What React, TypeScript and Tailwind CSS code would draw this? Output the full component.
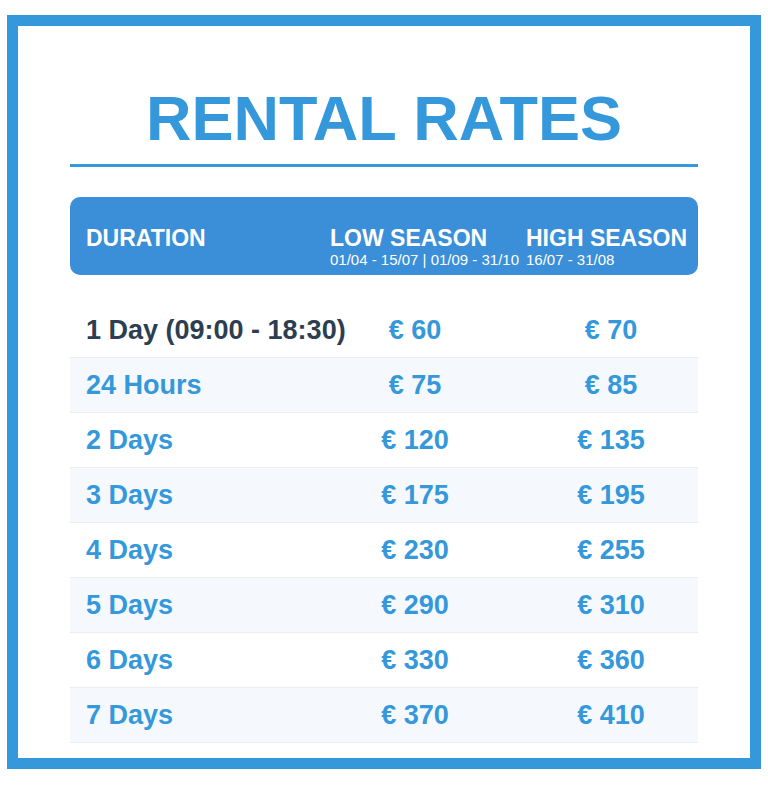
const RATES: { label: string; low: string; high: string }[] = [
  { label: "1 Day (09:00 - 18:30)", low: "€ 60", high: "€ 70" },
  { label: "24 Hours", low: "€ 75", high: "€ 85" },
  { label: "2 Days", low: "€ 120", high: "€ 135" },
  { label: "3 Days", low: "€ 175", high: "€ 195" },
  { label: "4 Days", low: "€ 230", high: "€ 255" },
  { label: "5 Days", low: "€ 290", high: "€ 310" },
  { label: "6 Days", low: "€ 330", high: "€ 360" },
  { label: "7 Days", low: "€ 370", high: "€ 410" },
];

export default function App() {
  return (
    <div className="min-h-screen bg-white px-[7px] pt-[15px] pb-4 font-['Liberation_Sans',Arial,sans-serif]">
      <div className="border-[11px] border-[#3498db] px-[52px] pt-[56px] pb-[15px]">
        <h1 className="text-center text-[63px] leading-[72px] font-bold text-[#3498db]">
          RENTAL RATES
        </h1>
        <div className="mt-[10px] h-[3px] bg-[#3498db]" />

        {/* header bar */}
        <div className="mt-[30px] grid h-[78px] grid-cols-[247px_196px_185px] items-start rounded-[10px] bg-[#3b8ed8] text-white">
          <div className="pt-[29px] pl-4 text-[23px] leading-[24px] font-bold">DURATION</div>
          <div className="pt-[28px] pl-[13px]">
            <div className="text-[23px] leading-[26px] font-bold whitespace-nowrap">LOW SEASON</div>
            <div className="text-[15px] leading-[17px] whitespace-nowrap">
              <span>01/04 - 15/07 | 01/09 - 31/10</span>
            </div>
          </div>
          <div className="pt-[28px] pl-[13px]">
            <div className="text-[23px] leading-[26px] font-bold whitespace-nowrap">HIGH SEASON</div>
            <div className="text-[15px] leading-[17px] whitespace-nowrap">
              <span>16/07 - 31/08</span>
            </div>
          </div>
        </div>

        {/* rows */}
        <div className="mt-[28px]">
          {RATES.map((r, i) => (
            <div
              key={r.label}
              className={
                "grid h-[55px] grid-cols-[247px_196px_185px] items-center border-b border-[#eaeef3] text-[27px] font-bold text-[#3498db] " +
                (i % 2 === 1 ? "bg-[#f5f8fc]" : "bg-white")
              }
            >
              <div className={"pl-4 whitespace-nowrap " + (i === 0 ? "text-[#2c3e50]" : "")}>{r.label}</div>
              <div className="text-center">{r.low}</div>
              <div className="pl-[11px] text-center">{r.high}</div>
            </div>
          ))}
        </div>
      </div>
    </div>
  );
}
